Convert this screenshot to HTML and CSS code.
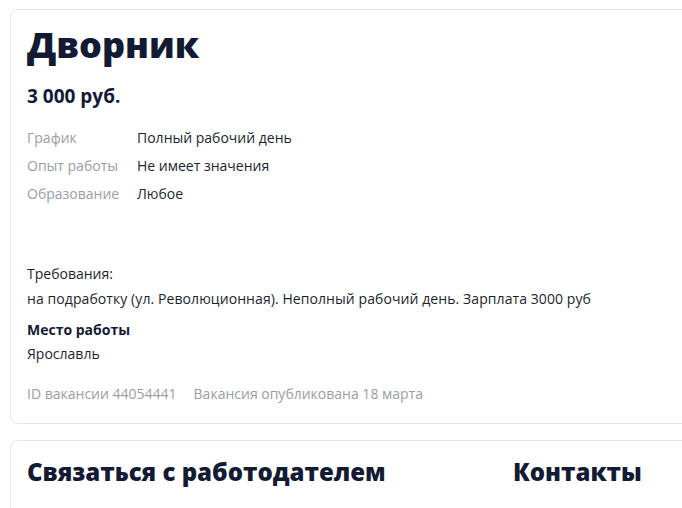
FILE: index.html
```html
<!DOCTYPE html>
<html lang="ru">
<head>
<meta charset="utf-8">
<title>Дворник</title>
<link rel="stylesheet" href="styles.css">
</head>
<body>
<main class="page">
  <section class="card vacancy">
    <h1 class="title">Дворник</h1>
    <div class="salary">3 000 руб.</div>
    <dl class="facts">
      <div class="fact"><dt>График</dt><dd>Полный рабочий день</dd></div>
      <div class="fact"><dt>Опыт работы</dt><dd>Не имеет значения</dd></div>
      <div class="fact"><dt>Образование</dt><dd>Любое</dd></div>
    </dl>
    <div class="desc">
      <p>Требования:</p>
      <p>на подработку (ул. Революционная). Неполный рабочий день. Зарплата 3000 руб</p>
    </div>
    <h3 class="place-title">Место работы</h3>
    <p class="place">Ярославль</p>
    <div class="meta">
      <span>ID вакансии 44054441</span>
      <span>Вакансия опубликована 18 марта</span>
    </div>
  </section>
  <section class="card contact">
    <h2 class="contact-title">Связаться с работодателем</h2>
    <h2 class="contact-title">Контакты</h2>
  </section>
</main>
</body>
</html>
```

FILE: styles.css
```css
* { box-sizing: border-box; }
html, body { margin: 0; padding: 0; background: #fff; }
body {
  font-family: "Open Sans", "Noto Sans", sans-serif;
  color: #1b1f2e;
  font-size: 14px;
}
.page {
  padding: 9px 0 0 10px;
  width: 720px;
}
.card {
  border: 1px solid #e4e4e6;
  border-radius: 8px;
  background: #fff;
}
.vacancy {
  padding: 13px 16px 17px 16px;
}
.title {
  margin: 0;
  font-size: 36px;
  line-height: 44px;
  font-weight: 800;
  color: #131b34;
}
.salary {
  margin-top: 17px;
  font-size: 19px;
  line-height: 24px;
  font-weight: 700;
  color: #131b34;
}
.facts {
  margin: 16px 0 0 0;
}
.fact {
  display: flex;
  line-height: 28px;
}
.fact dt {
  width: 110px;
  color: #9a9da5;
}
.fact dd {
  margin: 0;
  color: #1b1f2e;
}
.desc {
  margin-top: 53px;
}
.desc p {
  margin: 0;
  line-height: 25px;
}
.desc p + p {
  letter-spacing: 0.08px;
}
.place-title {
  margin: 7px 0 0 0;
  font-size: 14px;
  line-height: 24px;
  font-weight: 700;
  color: #131b34;
}
.place {
  margin: 0;
  line-height: 24px;
}
.meta {
  margin-top: 16px;
  display: flex;
  gap: 17px;
  line-height: 24px;
  color: #9a9da5;
}
.contact {
  margin-top: 16px;
  padding: 15px 16px 30px 16px;
  display: flex;
}
.contact-title {
  margin: 0;
  font-size: 24px;
  line-height: 32px;
  font-weight: 800;
  color: #131b34;
}
.contact-title:first-child {
  width: 486px;
}
```
